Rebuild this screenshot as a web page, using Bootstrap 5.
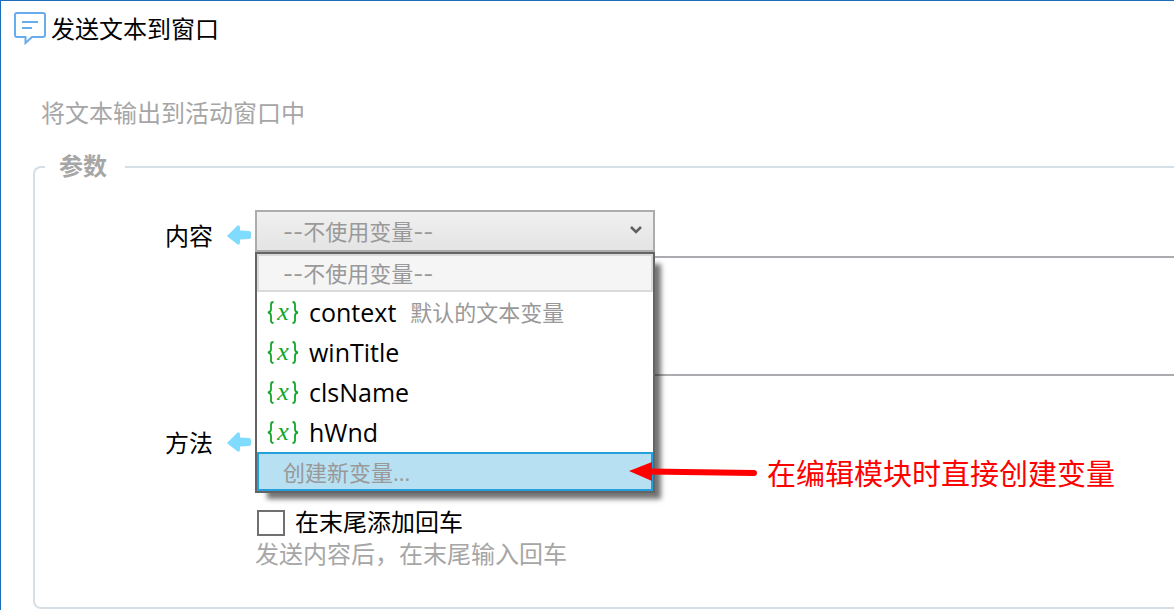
<!DOCTYPE html>
<html lang="zh-CN">
<head>
<meta charset="utf-8">
<meta name="viewport" content="width=device-width, initial-scale=1">
<title>发送文本到窗口</title>
<link href="https://cdn.jsdelivr.net/npm/bootstrap@5.3.0/dist/css/bootstrap.min.css" rel="stylesheet">
<style>
  body { font-family: "Noto Sans", "Noto Sans CJK SC", sans-serif; font-size: 24px; line-height: 36px; color: #000; background: #fff; overflow-x: hidden; }
  .app-window { border-top: 1px solid #1a6fb8; border-left: 1px solid #1a6fb8; min-height: 100vh; }
  .cjk { font-family: "Noto Sans CJK SC", sans-serif; }
  .title-bar { padding: 9px 13px 0; gap: 5px; }
  .title-bar h1 { font-size: 24px; line-height: 36px; font-weight: 400; }
  .muted { color: #a6a6a6; }
  .intro { margin: 48px 0 0 40px; }
  .params { margin: 17px 0 0 32px; border: 2px solid #d5dfe6; border-right: 0; border-radius: 8px 0 0 8px; padding: 0 0 38px; }
  .params legend { font-size: 24px; line-height: 36px; font-weight: 700; margin: 0 0 23px 10px; padding: 0 18px 4px 14px; }
  .form-line { gap: 4px; }
  .line-label { width: 216px; gap: 14px; }
  .top-label { padding-top: 7px; }
  .picker { width: 400px; }
  .picker select { width: 100%; height: 42px; padding: 2px 26px 0; border: 2px solid #acacac; border-radius: 0; background: linear-gradient(#f0f0f0, #e4e4e4); color: #999; font-family: Inter, "Noto Sans CJK SC", sans-serif; font-size: 22px; appearance: none; }
  .picker .chevron { right: 13px; top: 15px; pointer-events: none; }
  .content-box { width: 100%; height: 120px; margin-top: 4px; border: 2px solid #acacb0; border-right: 0; resize: none; }
  .var-menu { top: 42px; left: 0; width: 100%; z-index: 5; border: 2px solid #646464; background: #fff; box-shadow: 9px 9px 5px -3px rgba(0,0,0,.55); }
  .var-menu button { height: 40px; padding: 0 10px; gap: 10px; border: 0; background: none; color: #000; font-family: "Open Sans", "Noto Sans CJK SC", sans-serif; }
  .var-name { font-size: 25px; }
  .var-menu .plain { height: 38px; padding: 0 24px; border: 2px solid #dadada; background: #f5f5f5; color: #999; font-size: 22px; }
  .var-menu .none { padding-top: 2px; font-family: Inter, "Noto Sans CJK SC", sans-serif; }
  .var-menu .create { height: 39px; border-color: #26a0da; background: #b7e0f2; }
  .var-note { font-size: 22px; color: #999; margin-left: 4px; }
  .callout-note { left: 372px; bottom: -1px; gap: 10px; color: #f00; font-size: 29px; line-height: 40px; white-space: nowrap; }
  .method-line { margin-top: 48px; }
  .tick-line { margin: 45px 0 0 222px; gap: 10px; }
  .tick-line input { width: 28px; height: 26px; border: 2px solid #707070; appearance: none; background: #fff; margin: 4px 0 0; }
  .tick-line label { line-height: 32px; }
  .tick-hint { margin-left: 220px; line-height: 32px; }
</style>
</head>
<body>
<svg class="d-none">
  <symbol id="back-arrow" viewBox="0 0 24 20"><path d="M2 9 10 1Q13-1 13 3V5.500L22 6Q24 6 24 8V12Q24 14 22 14L13 14.500V17Q13 21 10 19L1 12Q-1 10.500 2 9Z" fill="#80dcff"/></symbol>
  <symbol id="variable" viewBox="0 0 32 26"><g fill="none" stroke="#14a52c" stroke-width="1.800"><path d="M6.500 3Q4 3 4 5.500V10Q4 13 1 13.500Q4 14 4 17V21.500Q4 24 6.500 24"/><path d="M25.500 3Q28 3 28 5.500V10Q28 13 31 13.500Q28 14 28 17V21.500Q28 24 25.500 24"/></g><text x="16" y="21" text-anchor="middle" font-family="Liberation Serif, serif" font-style="italic" font-size="26" fill="#14a52c">x</text></symbol>
</svg>
<main class="app-window">
  <header class="title-bar d-flex align-items-center">
    <svg width="32" height="34" viewBox="0 0 32 34" fill="none" stroke="#67aced" stroke-width="2" aria-hidden="true"><path d="M3 2H29Q31 2 31 4V24Q31 26 29 26H18L11.500 32V26H3Q1 26 1 24V4Q1 2 3 2Z"/><path d="M8 11H24M8 17H18"/></svg>
    <h1 class="cjk m-0">发送文本到窗口</h1>
  </header>
  <p class="intro cjk muted mb-0">将文本输出到活动窗口中</p>

  <fieldset class="params cjk">
    <legend class="float-none w-auto muted">参数</legend>

    <div class="form-line d-flex">
      <div class="line-label top-label d-flex justify-content-end align-items-center align-self-start flex-shrink-0">
        <label for="content">内容</label>
        <svg width="24" height="20" aria-hidden="true"><use href="#back-arrow"/></svg>
      </div>
      <div class="flex-grow-1">
        <div class="picker position-relative">
          <select id="content" class="d-block"><option>--不使用变量--</option></select>
          <svg class="chevron position-absolute" width="12" height="10" viewBox="0 0 12 10" fill="none" stroke="#606060" stroke-width="2.500" aria-hidden="true"><path d="M1 2 6 7 11 2"/></svg>
          <div class="var-menu position-absolute">
            <button type="button" class="plain none w-100 d-flex align-items-center">--不使用变量--</button>
            <button type="button" class="w-100 d-flex align-items-center"><svg width="32" height="26" aria-hidden="true"><use href="#variable"/></svg><span class="var-name">context</span><span class="var-note">默认的文本变量</span></button>
            <button type="button" class="w-100 d-flex align-items-center"><svg width="32" height="26" aria-hidden="true"><use href="#variable"/></svg><span class="var-name">winTitle</span></button>
            <button type="button" class="w-100 d-flex align-items-center"><svg width="32" height="26" aria-hidden="true"><use href="#variable"/></svg><span class="var-name">clsName</span></button>
            <button type="button" class="w-100 d-flex align-items-center"><svg width="32" height="26" aria-hidden="true"><use href="#variable"/></svg><span class="var-name">hWnd</span></button>
            <button type="button" class="plain create w-100 d-flex align-items-center">创建新变量...</button>
            <div class="callout-note position-absolute d-flex align-items-center">
              <svg width="128" height="24" viewBox="0 0 128 24" aria-hidden="true"><path d="M0 11 23 2V21Z" fill="#f00"/><path d="M20 11.500 125 13" stroke="#f00" stroke-width="6" stroke-linecap="round"/></svg>
              <span>在编辑模块时直接创建变量</span>
            </div>
          </div>
        </div>
        <textarea class="content-box d-block" aria-label="内容"></textarea>
      </div>
    </div>

    <div class="form-line method-line d-flex">
      <div class="line-label d-flex justify-content-end align-items-center">
        <span>方法</span>
        <svg width="24" height="20" aria-hidden="true"><use href="#back-arrow"/></svg>
      </div>
    </div>

    <div class="tick-line d-flex align-items-center">
      <input type="checkbox" id="enter">
      <label for="enter">在末尾添加回车</label>
    </div>
    <div class="tick-hint muted">发送内容后，在末尾输入回车</div>
  </fieldset>
</main>
<script src="https://cdn.jsdelivr.net/npm/bootstrap@5.3.0/dist/js/bootstrap.bundle.min.js"></script>
</body>
</html>
